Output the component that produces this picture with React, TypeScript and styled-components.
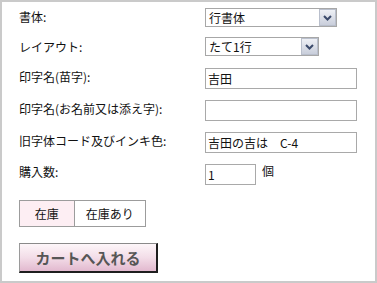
import React from "react"
import styled, { createGlobalStyle } from "styled-components"

const GlobalStyle = createGlobalStyle`
  body {
    margin: 0;
    background: #fff;
    font-family: "Noto Sans CJK JP", "Noto Sans", sans-serif;
  }
`

const Frame = styled.div`
  width: 377px;
  height: 283px;
  box-sizing: border-box;
  border: 2px solid #cacaca;
  padding: 6px 0 0 17px;
  font-size: 12px;
  color: #111;
`

const Row = styled.div<{ $h: number }>`
  display: grid;
  grid-template-columns: 186px auto;
  align-items: start;
  height: ${({ $h }) => $h}px;
`

const Label = styled.div<{ $pt?: number }>`
  padding-top: ${({ $pt }) => $pt ?? 1}px;
  line-height: 16px;
  white-space: nowrap;
`

const Select = styled.div<{ $w: number }>`
  display: flex;
  align-items: center;
  box-sizing: border-box;
  width: ${({ $w }) => $w}px;
  height: 19px;
  border: 1px solid #a7a7a7;
  background: #fff;
`

const SelectValue = styled.div`
  flex: 1;
  padding-left: 3px;
  line-height: 17px;
`

const SelectArrow = styled.div`
  display: flex;
  align-items: center;
  justify-content: center;
  box-sizing: border-box;
  width: 17px;
  height: 17px;
  border: 1px solid #b9bfcc;
  background: linear-gradient(#eef0f5, #c9cedb);
  color: #3b4a6b;
`

const TextInput = styled.input<{ $w: number }>`
  box-sizing: border-box;
  width: ${({ $w }) => $w}px;
  height: 21px;
  margin: 0;
  padding: 0 2px;
  border: 1px solid #a9a9a9;
  font: inherit;
  color: #111;
  outline: none;
`

const Qty = styled.div`
  display: flex;
  align-items: flex-start;
  gap: 6px;
`

const Unit = styled.span`
  line-height: 14px;
`

const Stock = styled.div`
  display: flex;
  box-sizing: border-box;
  width: 127px;
  height: 27px;
  margin-top: 13px;
  border: 1px solid #9c9c9c;
`

const StockCell = styled.div<{ $w: number; $bg: string }>`
  display: flex;
  align-items: center;
  justify-content: center;
  width: ${({ $w }) => $w}px;
  background: ${({ $bg }) => $bg};
  & + & {
    border-left: 1px solid #9c9c9c;
  }
`

const CartButton = styled.button`
  display: block;
  box-sizing: border-box;
  width: 139px;
  height: 30px;
  margin: 16px 0 0;
  padding: 0 0 1px;
  border-style: solid;
  border-width: 1px 2px 2px 1px;
  border-color: #8a8a8a #1e1e1e #1e1e1e #9a9a9a;
  background: linear-gradient(#fdf6f9 0%, #f3dde8 50%, #e2b9cf 100%);
  font-family: inherit;
  font-size: 15px;
  font-weight: bold;
  color: #565656;
  letter-spacing: 0;
`

const Chevron = () => (
  <svg width="9" height="6" viewBox="0 0 9 6">
    <path d="M1 1 L4.5 4.5 L8 1" fill="none" stroke="currentColor" strokeWidth="2" />
  </svg>
)

export default function App() {
  return (
    <>
      <GlobalStyle />
      <Frame>
        <Row $h={29}>
          <Label>書体:</Label>
          <Select $w={132}>
            <SelectValue>行書体</SelectValue>
            <SelectArrow>
              <Chevron />
            </SelectArrow>
          </Select>
        </Row>
        <Row $h={31}>
          <Label $pt={2}>レイアウト:</Label>
          <Select $w={114}>
            <SelectValue>たて1行</SelectValue>
            <SelectArrow>
              <Chevron />
            </SelectArrow>
          </Select>
        </Row>
        <Row $h={32}>
          <Label>印字名(苗字):</Label>
          <TextInput $w={152} readOnly defaultValue="吉田" />
        </Row>
        <Row $h={32}>
          <Label>印字名(お名前又は添え字):</Label>
          <TextInput $w={152} readOnly defaultValue="" />
        </Row>
        <Row $h={32}>
          <Label>旧字体コード及びインキ色:</Label>
          <TextInput $w={152} readOnly defaultValue="吉田の吉は　C-4" />
        </Row>
        <Row $h={23}>
          <Label $pt={0}>購入数:</Label>
          <Qty>
            <TextInput $w={51} readOnly defaultValue="1" />
            <Unit>個</Unit>
          </Qty>
        </Row>
        <Stock>
          <StockCell $w={54} $bg="#fdeef3">在庫</StockCell>
          <StockCell $w={71} $bg="#fff">在庫あり</StockCell>
        </Stock>
        <CartButton>カートへ入れる</CartButton>
      </Frame>
    </>
  )
}
